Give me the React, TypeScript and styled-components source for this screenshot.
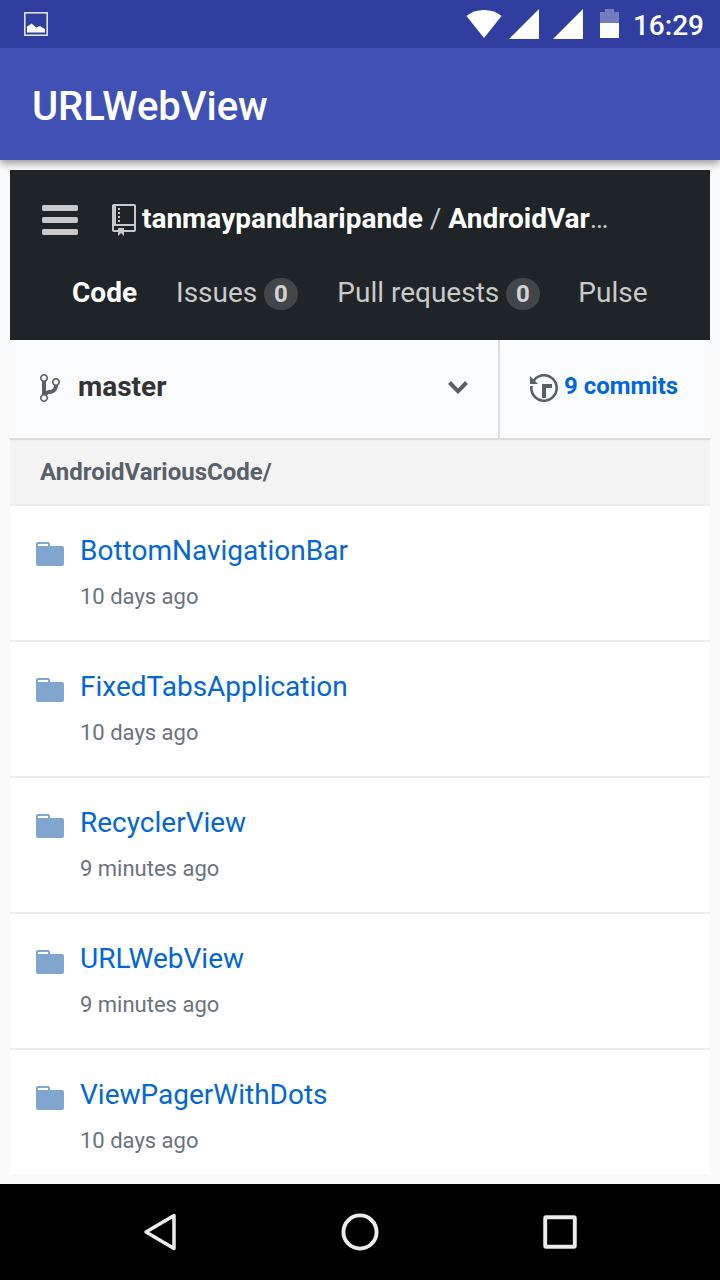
import React from "react";
import styled, { createGlobalStyle } from "styled-components";

const GlobalStyle = createGlobalStyle`
  * { box-sizing: border-box; }
  body { margin: 0; background: #fafafa; font-family: Roboto, "Liberation Sans", sans-serif; }
  svg { display: block; flex: none; }
`;

const Screen = styled.div`
  width: 720px;
  height: 1280px;
  display: flex;
  flex-direction: column;
  overflow: hidden;
  background: #fafafa;
`;

const StatusBar = styled.header`
  flex: none;
  position: relative;
  height: 48px;
  display: flex;
  justify-content: space-between;
  padding: 0 16px 0 24px;
  background: #303f9f;
`;

const StatusGroup = styled.div`
  display: flex;
`;

const Clock = styled.span`
  margin-left: 13px;
  font-size: 28px;
  font-weight: 500;
  line-height: 52px;
  color: #fff;
`;

const AppBar = styled.div`
  flex: none;
  height: 112px;
  padding: 3px 32px 0;
  background: #3f51b5;
  box-shadow: 0 3px 8px rgba(0, 0, 0, 0.42);
`;

const AppTitle = styled.h1`
  margin: 0;
  font-size: 40px;
  font-weight: 500;
  letter-spacing: -0.05px;
  line-height: 112px;
  color: #fff;
`;

const WebView = styled.main`
  flex: none;
  position: relative;
  height: 1004px;
  margin: 10px;
  background: #fff;
`;

const RepoHeader = styled.div`
  height: 170px;
  background: #1f2428;
`;

const RepoTitleRow = styled.div`
  display: flex;
  align-items: flex-start;
  padding: 26px 0 0 32px;
  height: 88px;
  color: #c8c9ca;
`;

const RepoIconSlot = styled.span`
  margin: 8px 6px 0 34px;
`;

const RepoName = styled.div`
  font-size: 28px;
  line-height: 45px;
  letter-spacing: -0.01px;
  white-space: pre;
`;

const Strong = styled.b`
  font-weight: 700;
  color: #fff;
`;

const Tabs = styled.nav`
  display: flex;
  padding-left: 62px;
`;

const Tab = styled.a<{ $active?: boolean; $gap: number }>`
  display: flex;
  margin-right: ${(p) => p.$gap}px;
  font-size: 28px;
  line-height: 70px;
  font-weight: ${(p) => (p.$active ? 700 : 400)};
  color: ${(p) => (p.$active ? "#fff" : "#c8c9ca")};
`;

const Counter = styled.span`
  width: 34px;
  height: 32px;
  margin: 20px 0 0 7px;
  padding-right: 1px;
  border-radius: 16px;
  background: #434648;
  color: #d2d3d4;
  font-size: 24px;
  font-weight: 700;
  line-height: 32px;
  text-align: center;
`;

const BranchBar = styled.div`
  display: flex;
  height: 100px;
  background: #fafbfd;
  border-bottom: 2px solid #dddddd;
  color: #586069;
`;

const BranchPicker = styled.div`
  display: flex;
  width: 490px;
  padding: 32px 30px 0;
  border-right: 2px solid #dddddd;
`;

const BranchName = styled.span`
  flex: 1;
  margin-left: 18px;
  font-size: 28px;
  font-weight: 700;
  line-height: 30px;
  color: #333;
`;

const Commits = styled.div`
  display: flex;
  padding: 32px 0 0 30px;
`;

const CommitsLink = styled.a`
  margin-left: 6px;
  font-size: 24px;
  font-weight: 700;
  line-height: 28px;
  color: #0366d6;
`;

const PathBar = styled.div`
  height: 66px;
  padding-left: 30px;
  background: #f4f4f4;
  border-top: 2px solid #f0f0f0;
  border-bottom: 2px solid #eeeeee;
  font-size: 24px;
  font-weight: 700;
  line-height: 60px;
  color: #586069;
`;

const FileRow = styled.div`
  display: flex;
  height: 136px;
  padding: 24px 26px 0;
  border-bottom: 2px solid #eeeeee;
  color: #80a6cd;

  &:last-child {
    height: 126px;
    border-bottom: 0;
  }
`;

const FolderSlot = styled.span`
  padding-top: 8px;
`;

const FileText = styled.div`
  margin-left: 16px;
`;

const FileName = styled.a`
  display: block;
  font-size: 28px;
  line-height: 42px;
  color: #0366d6;
`;

const FileAge = styled.span`
  display: block;
  margin-top: 8px;
  font-size: 22px;
  line-height: 33px;
  color: #6a737d;
`;

const NavBar = styled.footer`
  flex: none;
  height: 96px;
  display: flex;
  align-items: center;
  justify-content: center;
  gap: 152px;
  background: #000;
`;

const icons = {
  bars: "M11.41 9H.59C0 9 0 8.59 0 8c0-.59 0-1 .59-1H11.4c.59 0 .59.41.59 1 0 .59 0 1-.59 1h.01zm0-4H.59C0 5 0 4.59 0 4c0-.59 0-1 .59-1H11.4c.59 0 .59.41.59 1 0 .59 0 1-.59 1h.01zM.59 11H11.4c.59 0 .59.41.59 1 0 .59 0 1-.59 1H.59C0 13 0 12.59 0 12c0-.59 0-1 .59-1z",
  repo: "M4 9H3V8h1v1zm0-3H3v1h1V6zm0-2H3v1h1V4zm0-2H3v1h1V2zm8-1v12c0 .55-.45 1-1 1H6v2l-1.5-1.5L3 16v-2H1c-.55 0-1-.45-1-1V1c0-.55.45-1 1-1h10c.55 0 1 .45 1 1zm-1 10H1v2h2v-1h3v1h5v-2zm0-10H2v9h9V1z",
  branch: "M10 5c0-1.11-.89-2-2-2a1.993 1.993 0 0 0-1 3.72v.3c-.02.52-.23.98-.63 1.38-.4.4-.86.61-1.38.63-.83.02-1.48.16-2 .45V4.72a1.993 1.993 0 0 0-1-3.72C.88 1 0 1.89 0 3a2 2 0 0 0 1 1.72v6.56c-.59.35-1 .99-1 1.72 0 1.11.89 2 2 2 1.11 0 2-.89 2-2 0-.53-.2-1-.53-1.36.09-.06.48-.41.59-.47.25-.11.56-.17.94-.17 1.05-.05 1.95-.45 2.75-1.25S8.95 7.77 9 6.73h-.02C9.59 6.37 10 5.73 10 5zM2 1.8c.66 0 1.2.55 1.2 1.2 0 .65-.55 1.2-1.2 1.2C1.35 4.2.8 3.65.8 3c0-.65.55-1.2 1.2-1.2zm0 12.41c-.66 0-1.2-.55-1.2-1.2 0-.65.55-1.2 1.2-1.2.65 0 1.2.55 1.2 1.2 0 .65-.55 1.2-1.2 1.2zm6-8c-.66 0-1.2-.55-1.2-1.2 0-.65.55-1.2 1.2-1.2.65 0 1.2.55 1.2 1.2 0 .65-.55 1.2-1.2 1.2z",
  chevron: "M5 11L0 6l1.5-1.5L5 8.25 8.5 4.5 10 6z",
  history: "M8 13H6V6h5v2H8v5zM7 1C4.81 1 2.87 2.02 1.59 3.59L0 2v4h4L2.5 4.5C3.55 3.17 5.17 2.3 7 2.3c3.14 0 5.7 2.56 5.7 5.7s-2.56 5.7-5.7 5.7A5.71 5.71 0 0 1 1.3 8c0-.34.03-.67.09-1H.08C.03 7.33 0 7.66 0 8c0 3.86 3.14 7 7 7s7-3.14 7-7-3.14-7-7-7z",
  folder: "M13 4H7V3c0-.66-.31-1-1-1H1c-.55 0-1 .45-1 1v10c0 .55.45 1 1 1h12c.55 0 1-.45 1-1V5c0-.55-.45-1-1-1zM6 4H1V3h5v1z",
};

function Icon({ name, units, scale = 2 }: { name: keyof typeof icons; units: number; scale?: number }) {
  return (
    <svg width={units * scale} height={16 * scale} viewBox={`0 0 ${units} 16`} fill="currentColor">
      <path d={icons[name]} />
    </svg>
  );
}

const files = [
  { name: "BottomNavigationBar", age: "10 days ago" },
  { name: "FixedTabsApplication", age: "10 days ago" },
  { name: "RecyclerView", age: "9 minutes ago" },
  { name: "URLWebView", age: "9 minutes ago" },
  { name: "ViewPagerWithDots", age: "10 days ago" },
];

export default function App() {
  return (
    <>
      <GlobalStyle />
      <Screen>
        <StatusBar>
          <svg width="24" height="48" viewBox="0 0 24 48">
            <rect x="0.8" y="12.8" width="22.4" height="22.4" fill="none" stroke="#e0e2f1" strokeWidth="1.6" />
            <path d="M3 32.500V26.500L5.500 25L7.500 23.500L10 25.500L12 27.500L16 26L18 27.500L21 29V32.500Z" fill="#fff" />
          </svg>
          <StatusGroup>
            <svg width="154" height="48" viewBox="466 0 154 48" fill="#fff">
              <path d="M466.5 16C471 12 477 10 484 10S497 12 501.500 16L484 38Z" />
              <path d="M539 9V39H509Z" />
              <path d="M583 9V39H553Z" />
              <path d="M605 9h9v3h5v11h-19V12h5z" fillOpacity="0.33" />
              <rect x="600" y="23" width="19" height="15" />
            </svg>
            <Clock>16:29</Clock>
          </StatusGroup>
        </StatusBar>
        <AppBar>
          <AppTitle>URLWebView</AppTitle>
        </AppBar>
        <WebView>
          <RepoHeader>
            <RepoTitleRow>
              <Icon name="bars" units={12} scale={3} />
              <RepoIconSlot>
                <Icon name="repo" units={12} />
              </RepoIconSlot>
              <RepoName>
                <Strong>tanmaypandharipande</Strong> / <Strong>AndroidVar</Strong>…
              </RepoName>
            </RepoTitleRow>
            <Tabs>
              <Tab $active $gap={39}>Code</Tab>
              <Tab $gap={39}>
                Issues<Counter>0</Counter>
              </Tab>
              <Tab $gap={38}>
                Pull requests<Counter>0</Counter>
              </Tab>
              <Tab $gap={0}>Pulse</Tab>
            </Tabs>
          </RepoHeader>
          <BranchBar>
            <BranchPicker>
              <Icon name="branch" units={10} />
              <BranchName>master</BranchName>
              <Icon name="chevron" units={10} />
            </BranchPicker>
            <Commits>
              <Icon name="history" units={14} />
              <CommitsLink>9 commits</CommitsLink>
            </Commits>
          </BranchBar>
          <PathBar>AndroidVariousCode/</PathBar>
          {files.map((file) => (
            <FileRow key={file.name}>
              <FolderSlot>
                <Icon name="folder" units={14} />
              </FolderSlot>
              <FileText>
                <FileName>{file.name}</FileName>
                <FileAge>{file.age}</FileAge>
              </FileText>
            </FileRow>
          ))}
        </WebView>
        <NavBar>
          <svg width="48" height="48" viewBox="0 0 48 48" fill="none" stroke="#ececec" strokeWidth="3.500" strokeLinejoin="round">
            <path d="M38 7.500V40.500L10 24Z" />
          </svg>
          <svg width="48" height="48" viewBox="0 0 48 48" fill="none" stroke="#ececec" strokeWidth="3.900">
            <circle cx="24" cy="24" r="16.600" />
          </svg>
          <svg width="48" height="48" viewBox="0 0 48 48" fill="none" stroke="#ececec" strokeWidth="3.900">
            <rect x="9.200" y="9.200" width="29.600" height="29.600" rx="1" />
          </svg>
        </NavBar>
      </Screen>
    </>
  );
}
